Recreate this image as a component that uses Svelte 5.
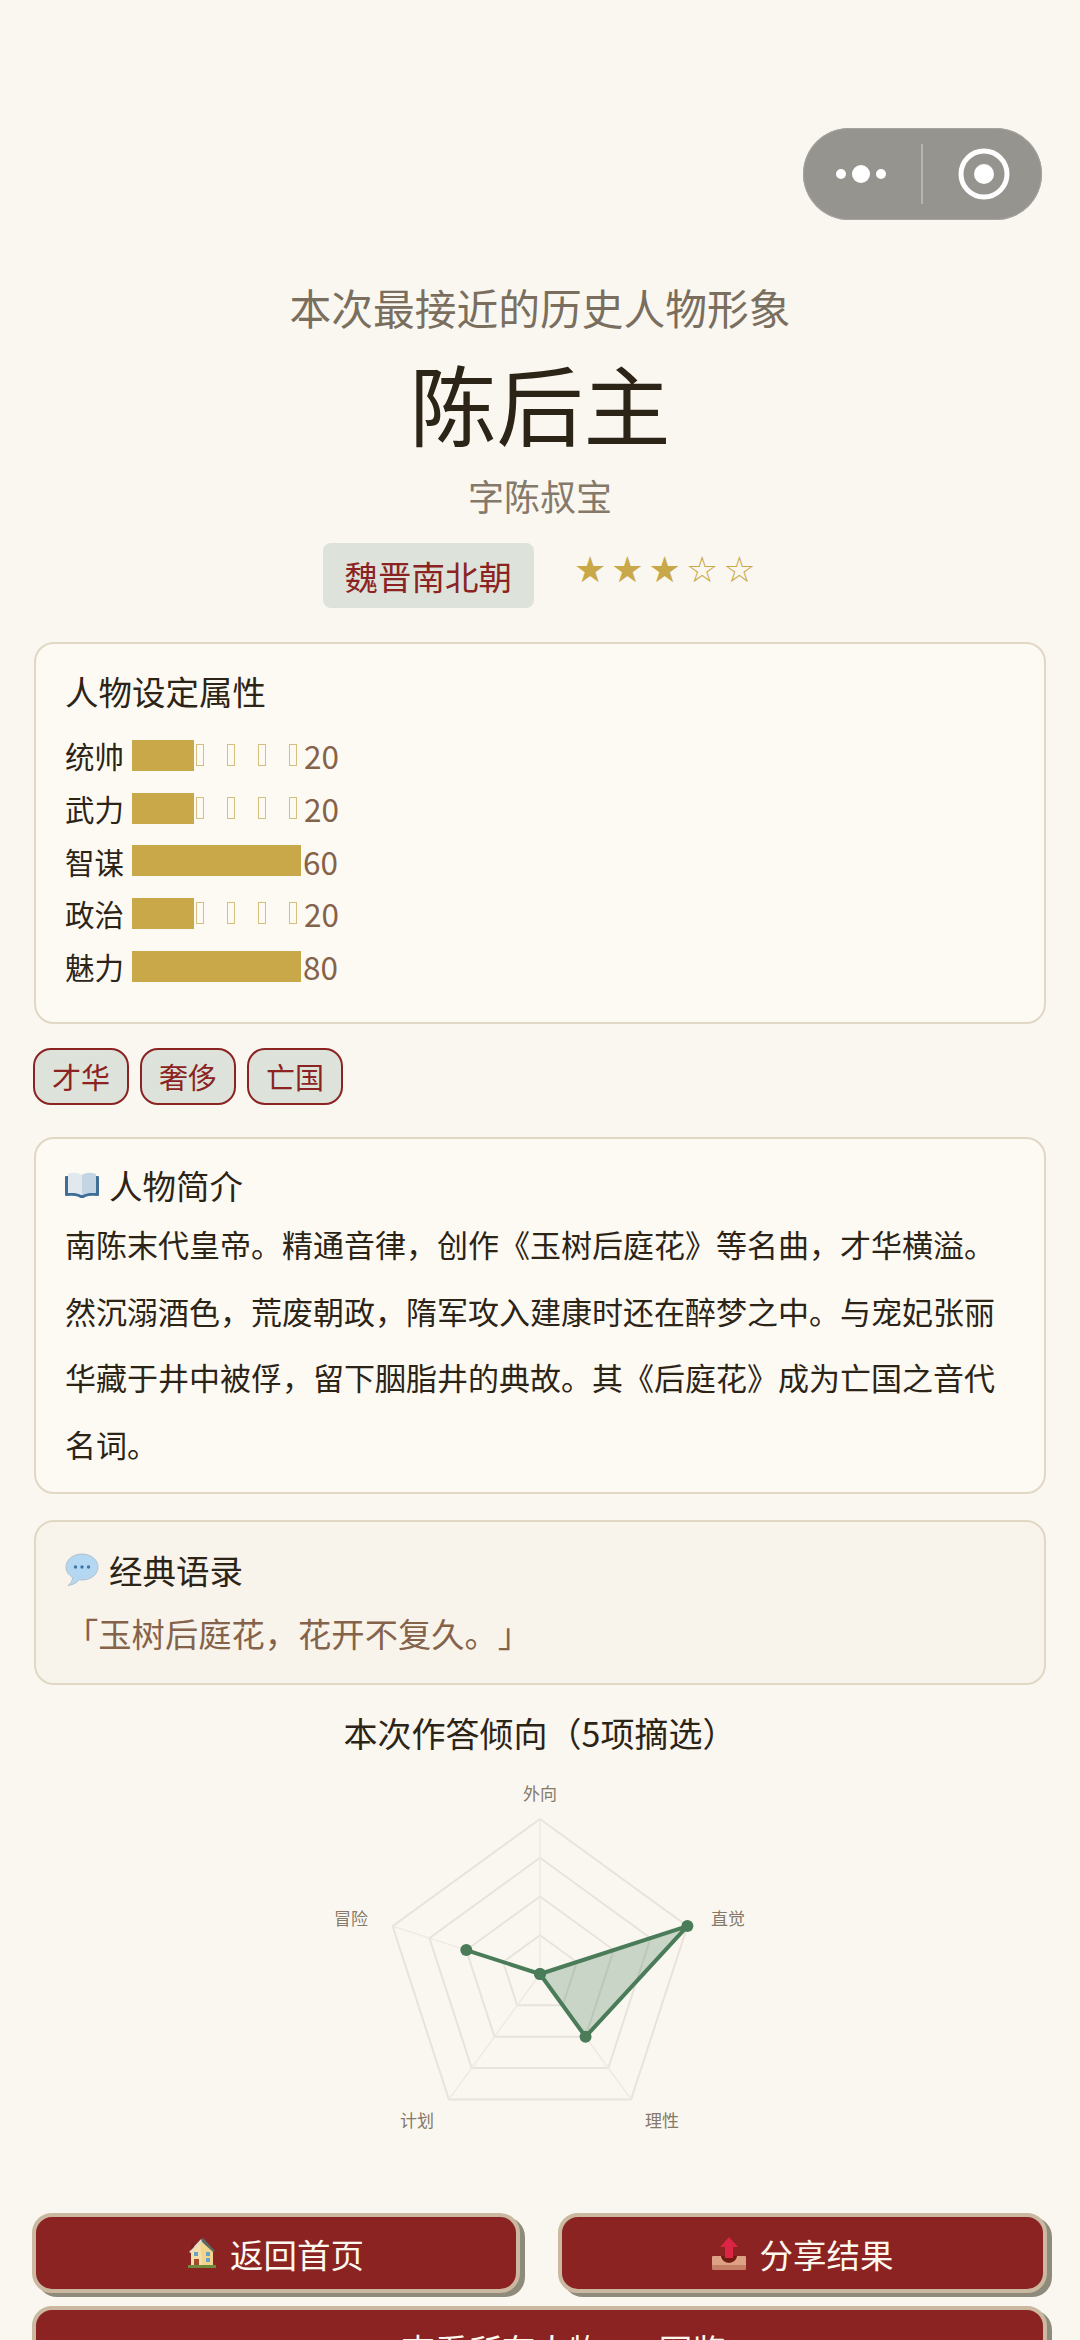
<script>
    const attrs = [
        { name: '统帅', value: 20, fill: 62, ticks: 4 },
        { name: '武力', value: 20, fill: 62, ticks: 4 },
        { name: '智谋', value: 60, fill: 169, ticks: 0 },
        { name: '政治', value: 20, fill: 62, ticks: 4 },
        { name: '魅力', value: 80, fill: 169, ticks: 0 }
    ];
    const traits = ['才华', '奢侈', '亡国'];

    // radar geometry
    const cx = 231;
    const cy = 205;
    const R = 155;
    const axes = [
        { label: '外向', v: 0, lx: 231, ly: 23 },
        { label: '直觉', v: 1, lx: 419, ly: 148 },
        { label: '理性', v: 0.5, lx: 353, ly: 350 },
        { label: '计划', v: 0, lx: 108, ly: 350 },
        { label: '冒险', v: 0.5, lx: 42, ly: 148 }
    ];

    function pt(i, r) {
        const a = (-90 + i * 72) * Math.PI / 180;
        return [cx + r * Math.cos(a), cy + r * Math.sin(a)];
    }
    function ring(scale) {
        return axes.map((_, i) => pt(i, R * scale).join(',')).join(' ');
    }
    const dataPts = axes.map((a, i) => pt(i, R * a.v));
    const dataLine = dataPts.map((p) => p.join(',')).join(' ');
</script>

<div class="page">
    <div class="capsule">
        <svg width="239" height="92" viewBox="0 0 239 92">
            <circle cx="38" cy="46" r="5" fill="#fff" />
            <circle cx="58" cy="46" r="9" fill="#fff" />
            <circle cx="78" cy="46" r="5" fill="#fff" />
            <rect x="118" y="16" width="2" height="60" fill="#fff" opacity="0.3" />
            <circle cx="181" cy="46" r="23" fill="none" stroke="#fff" stroke-width="5" />
            <circle cx="181" cy="46" r="10" fill="#fff" />
        </svg>
    </div>

    <header class="hero">
        <div class="subtitle">本次最接近的历史人物形象</div>
        <h1>陈后主</h1>
        <div class="courtesy">字陈叔宝</div>
        <div class="meta">
            <span class="era">魏晋南北朝</span>
            <span class="stars">★★★☆☆</span>
        </div>
    </header>

    <section class="card attrs">
        <h2>人物设定属性</h2>
        {#each attrs as a}
            <div class="row">
                <span class="name">{a.name}</span>
                <span class="bar" style="width: {a.fill}px"></span>
                {#each Array(a.ticks) as _, i}
                    <span class="tick" class:first={i === 0}></span>
                {/each}
                <span class="num" class:short={a.ticks > 0}>{a.value}</span>
            </div>
        {/each}
    </section>

    <div class="traits">
        {#each traits as t}
            <span class="trait">{t}</span>
        {/each}
    </div>

    <section class="card intro">
        <h2>
            <svg class="emoji" viewBox="0 0 34 26" width="34" height="26">
                <path d="M0 5q0-1 1-1h2v17q7-1 14 2q7-3 14-2V4h2q1 0 1 1v18q0 1-1 1q-8-1-13 1l-1 1h-4l-1-1q-5-2-13-1q-1 0-1-1z" fill="#3f6f96" />
                <path d="M3 2q8-3 14 1v20q-6-3-14-2z" fill="#e1e8ee" />
                <path d="M17 3q6-4 14-1v19q-8-1-14 2z" fill="#c3d4e3" />
            </svg>
            人物简介
        </h2>
        <p>南陈末代皇帝。精通音律，创作《玉树后庭花》等名曲，才华横溢。然沉溺酒色，荒废朝政，隋军攻入建康时还在醉梦之中。与宠妃张丽华藏于井中被俘，留下胭脂井的典故。其《后庭花》成为亡国之音代名词。</p>
    </section>

    <section class="card quote">
        <h2>
            <svg class="emoji" viewBox="0 0 34 34" width="34" height="34">
                <path d="M17 1C7.600 1 1 7 1 14c0 4.500 2.600 8 6.500 10.200C7.500 27.500 6 30.500 3 32.500c5-.5 9-3 11.500-5.800 1 .2 1.600.3 2.500.3 9.400 0 16-6 16-13S26.400 1 17 1z" fill="#b5d8f2" stroke="#a9b8c2" stroke-width="0.8" />
                <circle cx="10.500" cy="14" r="1.700" fill="#3f76a8" />
                <circle cx="17" cy="14" r="1.700" fill="#3f76a8" />
                <circle cx="23.500" cy="14" r="1.700" fill="#3f76a8" />
            </svg>
            经典语录
        </h2>
        <p>「玉树后庭花，花开不复久。」</p>
    </section>

    <h3 class="radar-title">本次作答倾向（5项摘选）</h3>
    <svg class="radar" width="462" height="372" viewBox="0 0 462 372">
        {#each [1, 0.75, 0.5, 0.25] as s}
            <polygon points={ring(s)} fill="none" stroke="#e8e4dc" stroke-width="2" />
        {/each}
        {#each axes as _, i}
            <line x1={cx} y1={cy} x2={pt(i, R)[0]} y2={pt(i, R)[1]} stroke="#eeeae2" stroke-width="1.500" />
        {/each}
        <polygon points={dataLine} fill="#4a7c59" fill-opacity="0.28" stroke="#4a7c59" stroke-width="4" stroke-linejoin="round" />
        {#each dataPts as p}
            <circle cx={p[0]} cy={p[1]} r="6" fill="#4a7c59" />
        {/each}
        {#each axes as a}
            <text x={a.lx} y={a.ly} class="axis" text-anchor="middle" dominant-baseline="central">{a.label}</text>
        {/each}
    </svg>

    <div class="actions">
        <button class="btn home">
            <svg class="emoji" viewBox="0 0 28 30" width="28" height="30">
                <path d="M3 12L14 3l11 9v15H3z" fill="#f6dfa8" />
                <path d="M14 3l-2 2 2 22h11V12z" fill="#f3d48e" />
                <path d="M1 14L13 1l3 3-1 2-2-1L3 15z" fill="#e3ddc6" />
                <path d="M13 1l2-1 12 13-2 1L14 4z" fill="#5b6a63" />
                <path d="M3 5h3v4l-3 3z" fill="#7a1f22" />
                <rect x="6" y="14" width="4" height="4" fill="#6aa3c8" />
                <rect x="18" y="14" width="4" height="4" fill="#6aa3c8" />
                <rect x="18" y="20" width="4" height="4" fill="#6aa3c8" />
                <rect x="6" y="21" width="5" height="6" fill="#a5492e" />
                <rect x="0" y="27" width="28" height="3" fill="#6f8a3c" />
            </svg>
            返回首页
        </button>
        <button class="btn share">
            <svg class="emoji" viewBox="0 0 34 33" width="34" height="33">
                <path d="M0 20q0-1 1-1h8q2 7 8 7t8-7h8q1 0 1 1v11q0 2-2 2H2q-2 0-2-2z" fill="#dda184" />
                <path d="M0 28h34v3q0 2-2 2H2q-2 0-2-2z" fill="#c47f66" />
                <path d="M9 19q1 6 8 6q7 0 8-6z" fill="#6e1c12" />
                <path d="M17 0l9 10h-5v11h-8V10H8z" fill="#dc2545" />
            </svg>
            分享结果
        </button>
        <button class="btn wide">
            <svg class="emoji" viewBox="0 0 34 34" width="34" height="34">
                <rect x="2" y="14" width="30" height="18" rx="3" fill="#d9a441" />
            </svg>
            查看所有人物 · 图鉴
        </button>
    </div>
</div>

<style>
    :global(body) {
        margin: 0;
        background: #faf7f0;
    }

    .page {
        position: relative;
        box-sizing: border-box;
        height: 2340px;
        overflow: hidden;
        padding: 284px 34px 0;
        font-family: "Noto Sans CJK SC", "Noto Sans", sans-serif;
        color: #2c2416;
        text-spacing-trim: space-all;
    }

    .capsule {
        position: absolute;
        top: 128px;
        left: 803px;
        width: 239px;
        height: 92px;
        border-radius: 46px;
        background: #96948f;
        box-shadow: inset 0 0 0 1px #a6a4a0;
    }
    .capsule svg {
        display: block;
    }

    .hero {
        text-align: center;
    }
    .subtitle {
        font-size: 41.760px;
        line-height: 46px;
        color: #7a6f5f;
    }
    h1 {
        margin: 16px 0 0;
        font-size: 87px;
        line-height: 112px;
        font-weight: 400;
    }
    .courtesy {
        margin-top: 15px;
        font-size: 36px;
        line-height: 44px;
        color: #85796a;
    }
    .meta {
        display: flex;
        justify-content: center;
        align-items: center;
        gap: 40px;
        margin-top: 26px;
        padding-left: 3px;
    }
    .era {
        padding: 0 22px;
        height: 65px;
        line-height: 65px;
        border-radius: 8px;
        background: #dde3da;
        color: #8b2323;
        font-size: 33.500px;
    }
    .stars {
        font-family: "DejaVu Sans", sans-serif;
        font-size: 36px;
        letter-spacing: 5px;
        color: #c9a84a;
        margin-top: -12px;
    }

    .card {
        box-sizing: border-box;
        border: 2px solid #e0d8c4;
        border-radius: 20px;
        background: #fdfaf4;
        padding: 0 29px;
    }
    h2 {
        display: flex;
        align-items: center;
        gap: 10px;
        margin: 0;
        font-size: 33.500px;
        line-height: 44px;
        font-weight: 400;
    }

    .attrs {
        height: 382px;
        margin-top: 34px;
        padding-top: 25px;
    }
    .row {
        display: flex;
        align-items: center;
        height: 52.700px;
    }
    .attrs h2 {
        margin-bottom: 16px;
    }
    .name {
        width: 67px;
        font-size: 29.500px;
    }
    .bar {
        height: 31px;
        background: #c9a84a;
    }
    .tick {
        box-sizing: border-box;
        width: 8px;
        height: 22px;
        margin-left: 23px;
        border: 1px solid #d6bf7e;
    }
    .tick.first {
        margin-left: 2px;
    }
    .num {
        margin-left: 2px;
        font-size: 31.500px;
        color: #85634a;
    }
    .num.short {
        margin-left: 7px;
    }

    .traits {
        display: flex;
        gap: 11px;
        margin: 24px 0 0 -1px;
    }
    .trait {
        box-sizing: border-box;
        width: 96px;
        height: 57px;
        line-height: 52px;
        text-align: center;
        border: 2px solid #8b2323;
        border-radius: 18px;
        background: #dde3da;
        color: #8b2323;
        font-size: 29px;
    }

    .intro {
        height: 357px;
        margin-top: 32px;
        padding-top: 24px;
    }
    .intro p {
        margin: 4px 0 0;
        font-size: 31px;
        line-height: 66.700px;
    }

    .quote {
        height: 165px;
        margin-top: 26px;
        padding-top: 26px;
        background: #f8f4ec;
    }
    .quote p {
        margin: 18px 0 0;
        font-size: 33.300px;
        line-height: 46px;
        color: #85634a;
    }

    .radar-title {
        margin: 26px 0 0;
        text-align: center;
        font-size: 34px;
        line-height: 44px;
        font-weight: 400;
    }
    .radar {
        display: block;
        margin: 14px auto 0;
    }
    .axis {
        font-size: 17px;
        fill: #85796a;
    }

    .actions {
        display: grid;
        grid-template-columns: 488px 489px;
        justify-content: space-between;
        gap: 13px 0;
        margin: 72px -1px 0 -2px;
    }
    .btn {
        display: flex;
        align-items: center;
        justify-content: center;
        gap: 14px;
        box-sizing: border-box;
        height: 80px;
        border: 4px solid #cbb8a0;
        border-radius: 20px;
        background: #8b2323;
        color: #fdf8ee;
        font-family: inherit;
        font-size: 33.500px;
        box-shadow: 5px 4px 0 #8f8b7c;
    }
    .wide {
        grid-column: 1 / 3;
        padding-top: 6px;
        word-spacing: 4px;
    }
    .emoji {
        flex-shrink: 0;
    }
</style>
